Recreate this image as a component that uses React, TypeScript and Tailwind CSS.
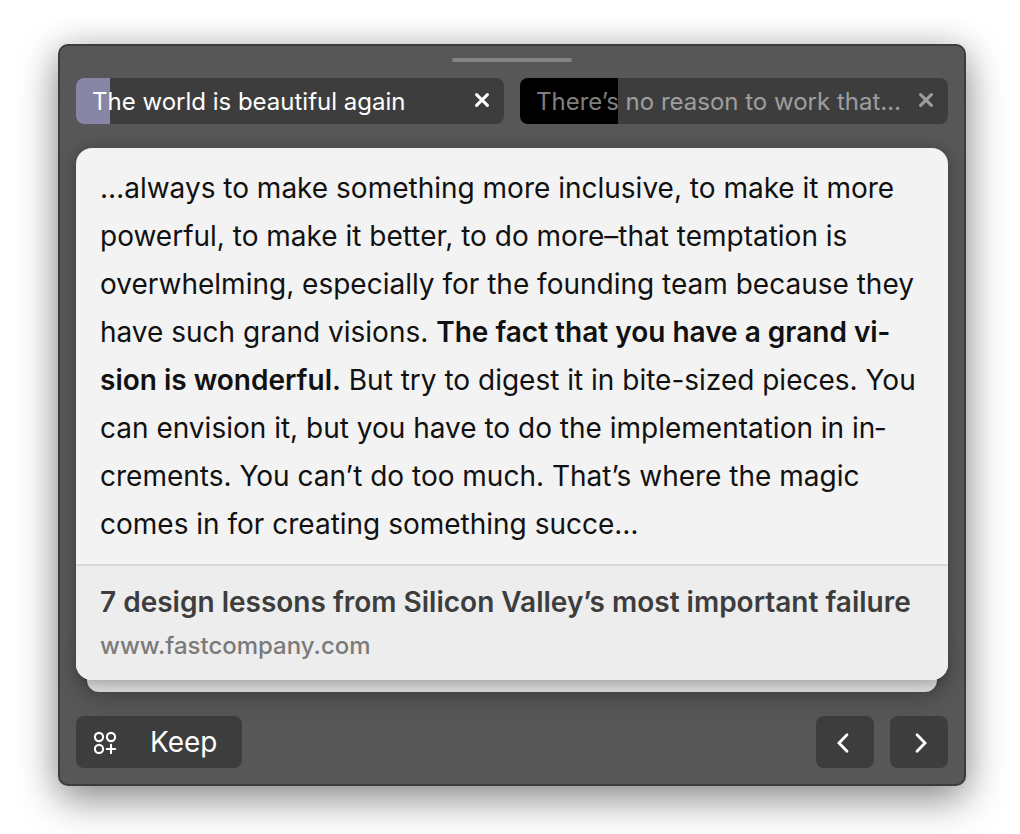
import React from "react";

type Topic = {
  label: string;
  active: boolean;
  progress: number;
};

const topics: Topic[] = [
  { label: "The world is beautiful again", active: true, progress: 34 },
  { label: "There’s no reason to work that…", active: false, progress: 98 },
];

function CloseIcon() {
  return (
    <svg width="16" height="16" viewBox="0 0 16 16" fill="none" stroke="currentColor" strokeWidth="3" strokeLinecap="round" aria-hidden="true">
      <path d="M2.6 1.6 13.4 12.4M13.4 1.6 2.6 12.4" />
    </svg>
  );
}

function KeepIcon() {
  return (
    <svg width="24" height="24" viewBox="0 0 24 24" fill="none" stroke="currentColor" strokeWidth="2.1" strokeLinecap="round" aria-hidden="true">
      <circle cx="6" cy="7" r="4.1" />
      <circle cx="18" cy="7" r="4.1" />
      <circle cx="6" cy="19" r="4.1" />
      <path d="M18 14.8v8.4M13.8 19h8.4" />
    </svg>
  );
}

function Chevron({ direction }: { direction: "left" | "right" }) {
  return (
    <svg width="20" height="24" viewBox="0 0 20 24" fill="none" stroke="currentColor" strokeWidth="2.8" strokeLinecap="round" strokeLinejoin="miter" aria-hidden="true">
      <path d={direction === "left" ? "M12 4.8 4 13 12 21.2" : "M8 4.8 16 13 8 21.2"} />
    </svg>
  );
}

function TopicTab({ topic }: { topic: Topic }) {
  return (
    <div className={`relative flex h-[46px] min-w-0 flex-1 items-center overflow-hidden rounded-lg bg-[#3d3d3d] pl-4 pr-3 ${topic.active ? "text-white" : "text-white/50"}`}>
      <span
        className={`absolute inset-y-0 left-0 ${topic.active ? "bg-[#8886a6]" : "bg-black"}`}
        style={{ width: topic.progress }}
      />
      <button type="button" className="relative min-w-0 flex-1 truncate pt-0.5 text-left text-2xl">
        {topic.label}
      </button>
      <button type="button" aria-label="Close" className="relative ml-3 flex h-8 w-5 shrink-0 items-center justify-center">
        <CloseIcon />
      </button>
    </div>
  );
}

export default function App() {
  return (
    <main className="min-h-screen bg-white pt-[44px] pr-[54px] pb-12 pl-[58px] font-[Inter,sans-serif]">
      <section className="flex flex-col rounded-[10px] border-2 border-[#3c3c3c] bg-[#575757] px-4 pt-3 pb-4 shadow-[0_14px_40px_rgba(0,0,0,0.42),0_0_32px_rgba(0,0,0,0.12)]">
        <div className="h-1 w-[120px] self-center rounded-full bg-[#858585]" />
        <nav className="mt-4 flex gap-4">
          {topics.map((topic) => (
            <TopicTab key={topic.label} topic={topic} />
          ))}
        </nav>

        <div className="relative mt-6 pb-3">
          <div className="absolute inset-x-[11px] bottom-0 h-12 rounded-xl bg-[#d9d9d9] shadow-[0_4px_24px_rgba(0,0,0,0.3)]" />
          <article className="relative overflow-hidden rounded-2xl bg-[#f3f3f3] shadow-[0_2px_16px_rgba(0,0,0,0.3)]">
            <p className="border-b-2 border-[#d8d8d8] px-6 py-4 text-[28px] leading-[48px] text-[#111111]">
              …always to make something more inclusive, to make it more powerful, to make it better, to do more–that temptation is overwhelming, especially for the founding team because they have such grand visions.{" "}
              <strong className="font-semibold">The fact that you have a grand vi&shy;sion is wonderful.</strong>{" "}
              But try to digest it in bite-sized pieces. You can envision it, but you have to do the implementation in in&shy;crements. You can’t do too much. That’s where the magic comes in for creating something succe…
            </p>
            <footer className="bg-[#ededed] px-6 pt-4 pb-[14px]">
              <h1 className="truncate text-[28px] leading-10 font-semibold text-[#3d3d3d]">
                7 design lessons from Silicon Valley’s most important failure
              </h1>
              <a href="#source" className="mt-1 block text-2xl leading-10 font-medium text-[#7a7a7a]">
                www.fastcompany.com
              </a>
            </footer>
          </article>
        </div>

        <div className="mt-6 flex gap-4 text-white">
          <button type="button" className="mr-auto flex h-[52px] items-center gap-[33px] rounded-lg bg-[#3d3d3d] pr-6 pl-[17px] text-[28px]">
            <KeepIcon />
            Keep
          </button>
          <button type="button" aria-label="Previous" className="flex h-[52px] w-[58px] items-center justify-center rounded-lg bg-[#3d3d3d]">
            <Chevron direction="left" />
          </button>
          <button type="button" aria-label="Next" className="flex h-[52px] w-[58px] items-center justify-center rounded-lg bg-[#3d3d3d]">
            <Chevron direction="right" />
          </button>
        </div>
      </section>
    </main>
  );
}
